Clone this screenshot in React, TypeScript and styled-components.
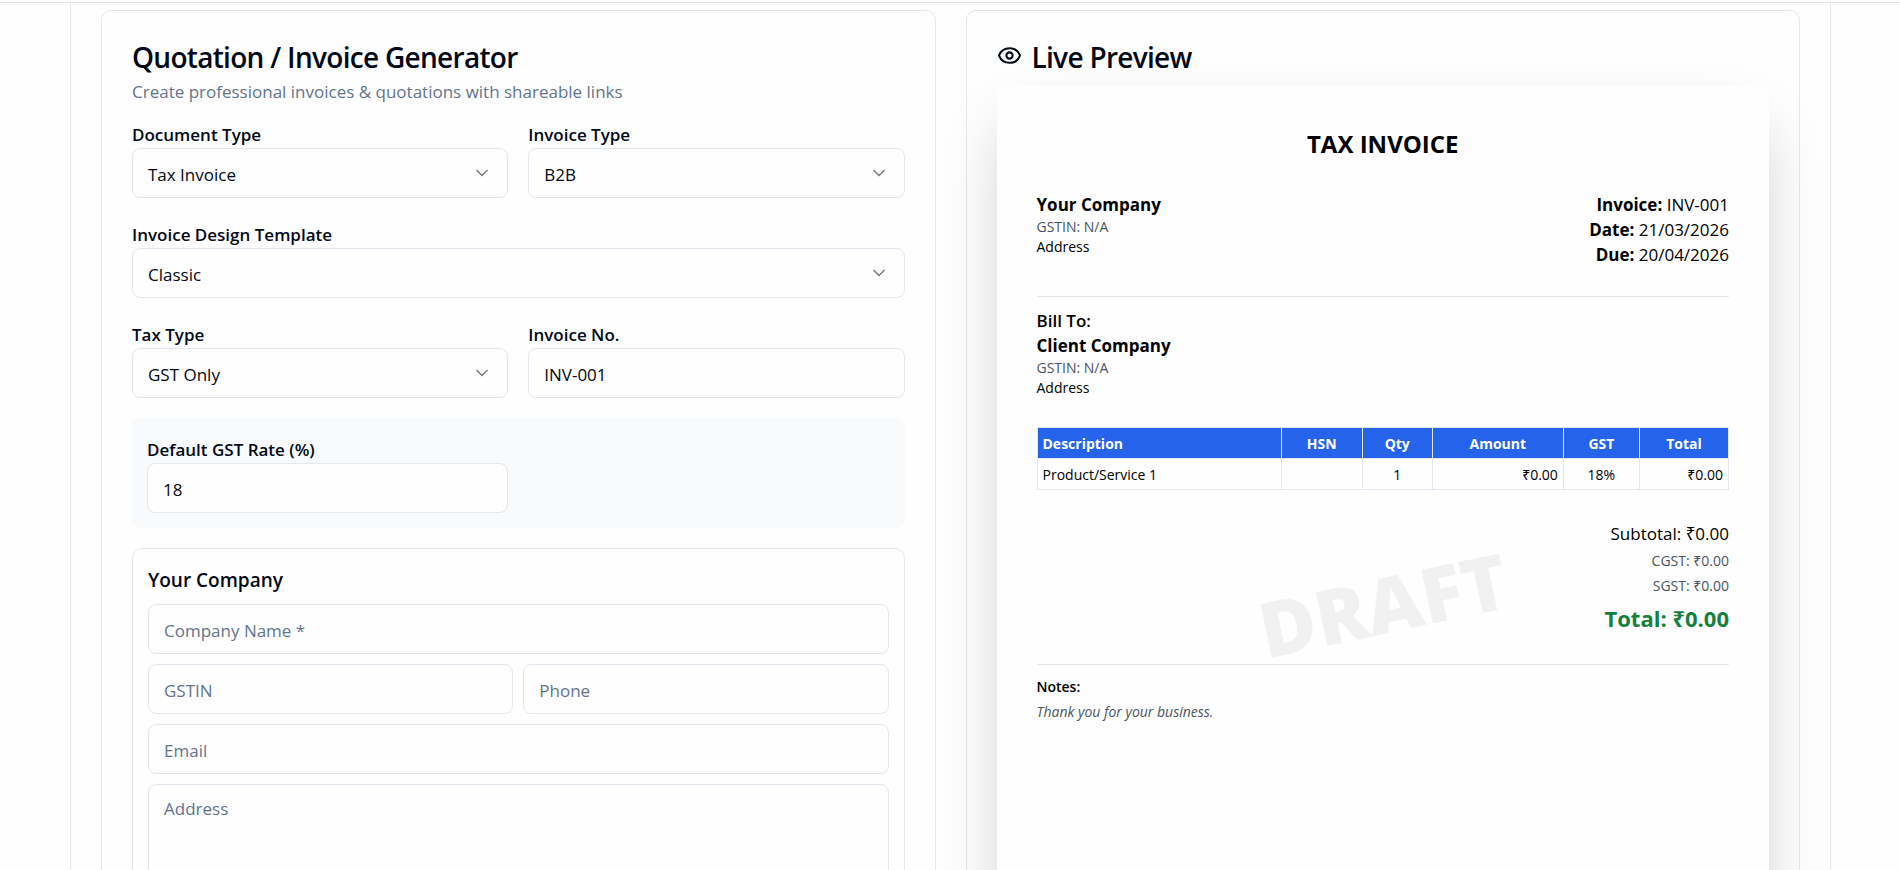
import React, { useId, useState } from "react";
import styled, { createGlobalStyle } from "styled-components";
import { ChevronDown, Eye } from "lucide-react";

const GlobalStyle = createGlobalStyle`
  *, *::before, *::after { box-sizing: border-box; }
  body {
    margin: 0;
    background: #fefefe;
    color: #020817;
    font-family: "Open Sans", "Noto Sans", sans-serif;
    font-size: 17px;
    line-height: 25px;
  }
  h1, h2, h3, p { margin: 0; }
  input, select, textarea, button { font: inherit; color: inherit; }
`;

const TopBar = styled.header`
  height: 3px;
  border-bottom: 1px solid #e2e5e9;
`;

const Container = styled.main`
  margin: 0 69px 0 70px;
  padding: 7px 30px 40px;
  border: solid #e2e5e9;
  border-width: 0 1px;
  display: grid;
  grid-template-columns: minmax(0, 1fr) minmax(0, 1fr);
  gap: 30px;
`;

const Card = styled.section`
  border: 1px solid #e5e8eb;
  border-radius: 10px;
  padding: 30px;
  display: flex;
  flex-direction: column;
`;

const CardTitle = styled.h2`
  display: flex;
  align-items: flex-start;
  gap: 10px;
  font-size: 28px;
  font-weight: 600;
  line-height: 32px;
  letter-spacing: -0.025em;
  svg { margin-top: 2px; }
`;

const Subtitle = styled.p`
  margin-top: 6px;
  color: #64748b;
`;

const Form = styled.form`
  margin-top: 14px;
  display: flex;
  flex-direction: column;
  gap: 20px;
`;

const Columns = styled.div<{ $gap: number }>`
  display: grid;
  grid-template-columns: minmax(0, 1fr) minmax(0, 1fr);
  gap: ${(p) => p.$gap}px;
`;

const FieldBox = styled.div`
  display: flex;
  flex-direction: column;
`;

const Label = styled.label`
  padding-top: 4px;
  font-weight: 600;
  line-height: 26px;
`;

const controlStyle = `
  width: 100%;
  border: 1px solid #e2e8f0;
  border-radius: 8px;
  background: #fefefe;
  padding: 2px 15px 0;
  outline: none;
  &::placeholder { color: #64748b; opacity: 1; }
  &:focus-visible { border-color: #2563eb; }
`;

const Input = styled.input`
  ${controlStyle}
  height: 50px;
`;

const TextArea = styled.textarea`
  ${controlStyle}
  display: block;
  height: 100px;
  padding-top: 11px;
  resize: none;
`;

const SelectWrap = styled.div`
  position: relative;
  svg {
    position: absolute;
    right: 16px;
    top: 15px;
    opacity: 0.5;
    pointer-events: none;
  }
`;

const Select = styled.select`
  ${controlStyle}
  height: 50px;
  appearance: none;
`;

const RatePanel = styled.div`
  background: #f8fafc;
  border-radius: 8px;
  padding: 15px;
`;

const Group = styled.fieldset`
  margin: 0;
  min-width: 0;
  border: 1px solid #e2e8f0;
  border-radius: 10px;
  padding: 15px;
  display: flex;
  flex-direction: column;
  gap: 10px;
`;

const GroupTitle = styled.h3`
  padding-top: 2px;
  font-size: 19px;
  font-weight: 600;
  line-height: 28px;
`;

const Sheet = styled.article`
  position: relative;
  margin-top: 13px;
  min-height: 1036px;
  padding: 40px;
  background: #fefefe;
  color: #000;
  box-shadow: 0 31px 62px -15px rgba(0, 0, 0, 0.25);
`;

const SheetTitle = styled.h1`
  font-size: 24px;
  font-weight: 700;
  line-height: 36px;
  text-align: center;
`;

const SheetHead = styled.div`
  display: flex;
  justify-content: space-between;
  margin-top: 30px;
  padding-bottom: 29px;
  border-bottom: 1px solid #e2e5e9;
`;

const Meta = styled.div`
  text-align: right;
`;

const BillTo = styled.div`
  padding-top: 11px;
`;

const BillLabel = styled.p`
  font-weight: 600;
`;

const PartyName = styled.p`
  font-weight: 700;
`;

const Small = styled.p<{ $muted?: boolean }>`
  font-size: 14px;
  line-height: 20px;
  color: ${(p) => (p.$muted ? "#4b5563" : "inherit")};
`;

const Items = styled.table`
  width: 100%;
  margin-top: 29px;
  border-collapse: collapse;
  table-layout: fixed;
  font-size: 14px;
  line-height: 20px;
`;

const Col = styled.col<{ $w: number }>`
  width: ${(p) => p.$w}px;
`;

type Align = "left" | "center" | "right";

const Th = styled.th<{ $align?: Align }>`
  padding: 6px 5px 4px;
  border: 1px solid #e2e8f0;
  background: #2563eb;
  color: #fff;
  font-weight: 700;
  text-align: ${(p) => p.$align ?? "center"};
`;

const Td = styled.td<{ $align?: Align }>`
  padding: 6px 5px 4px;
  border: 1px solid #e2e8f0;
  text-align: ${(p) => p.$align ?? "center"};
`;

const Totals = styled.div`
  margin-top: 31px;
  padding-bottom: 28px;
  border-bottom: 1px solid #e2e5e9;
  text-align: right;
`;

const TaxLines = styled.div`
  padding-top: 2px;
  font-size: 14px;
  color: #4b5563;
`;

const GrandTotal = styled.p`
  margin-top: 3px;
  font-size: 22px;
  font-weight: 700;
  line-height: 35px;
  color: #15803d;
`;

const Notes = styled.div`
  padding-top: 9px;
  font-size: 14px;
`;

const NotesLabel = styled.p`
  font-weight: 600;
`;

const NotesText = styled.p`
  font-style: italic;
  color: #4b5563;
`;

const Watermark = styled.div`
  position: absolute;
  left: 50%;
  top: 50%;
  transform: translate(-50%, -50%) rotate(-12deg);
  font-size: 77px;
  font-weight: 800;
  line-height: 1;
  color: rgba(0, 0, 0, 0.05);
  pointer-events: none;
`;

function SelectField({ label, options }: { label: string; options: string[] }) {
  const id = useId();
  return (
    <FieldBox>
      <Label htmlFor={id}>{label}</Label>
      <SelectWrap>
        <Select id={id} defaultValue={options[0]}>
          {options.map((o) => (
            <option key={o}>{o}</option>
          ))}
        </Select>
        <ChevronDown size={20} />
      </SelectWrap>
    </FieldBox>
  );
}

function TextField(props: { label: string; value: string; onChange: (v: string) => void }) {
  const id = useId();
  return (
    <FieldBox>
      <Label htmlFor={id}>{props.label}</Label>
      <Input id={id} value={props.value} onChange={(e) => props.onChange(e.target.value)} />
    </FieldBox>
  );
}

function Party({ name }: { name: string }) {
  return (
    <>
      <PartyName>{name}</PartyName>
      <Small $muted>GSTIN: N/A</Small>
      <Small>Address</Small>
    </>
  );
}

export default function App() {
  const [invoiceNo, setInvoiceNo] = useState("INV-001");
  const [rate, setRate] = useState("18");

  return (
    <>
      <GlobalStyle />
      <TopBar />
      <Container>
        <Card>
          <CardTitle>Quotation / Invoice Generator</CardTitle>
          <Subtitle>Create professional invoices &amp; quotations with shareable links</Subtitle>
          <Form>
            <Columns $gap={20}>
              <SelectField label="Document Type" options={["Tax Invoice", "Quotation"]} />
              <SelectField label="Invoice Type" options={["B2B", "B2C"]} />
            </Columns>
            <SelectField label="Invoice Design Template" options={["Classic", "Modern"]} />
            <Columns $gap={20}>
              <SelectField label="Tax Type" options={["GST Only", "No Tax"]} />
              <TextField label="Invoice No." value={invoiceNo} onChange={setInvoiceNo} />
            </Columns>
            <RatePanel>
              <Columns $gap={20}>
                <TextField label="Default GST Rate (%)" value={rate} onChange={setRate} />
              </Columns>
            </RatePanel>
            <Group>
              <GroupTitle>Your Company</GroupTitle>
              <Input aria-label="Company Name" placeholder="Company Name *" />
              <Columns $gap={10}>
                <Input aria-label="GSTIN" placeholder="GSTIN" />
                <Input aria-label="Phone" placeholder="Phone" />
              </Columns>
              <Input type="email" aria-label="Email" placeholder="Email" />
              <TextArea aria-label="Address" placeholder="Address" />
            </Group>
          </Form>
        </Card>

        <Card>
          <CardTitle>
            <Eye size={25} />
            Live Preview
          </CardTitle>
          <Sheet>
            <Watermark>DRAFT</Watermark>
            <SheetTitle>TAX INVOICE</SheetTitle>
            <SheetHead>
              <div>
                <Party name="Your Company" />
              </div>
              <Meta>
                <p><strong>Invoice:</strong> {invoiceNo}</p>
                <p><strong>Date:</strong> 21/03/2026</p>
                <p><strong>Due:</strong> 20/04/2026</p>
              </Meta>
            </SheetHead>
            <BillTo>
              <BillLabel>Bill To:</BillLabel>
              <Party name="Client Company" />
            </BillTo>
            <Items>
              <colgroup>
                <Col $w={244} />
                <Col $w={81} />
                <Col $w={70} />
                <Col $w={131} />
                <Col $w={76} />
                <Col $w={89} />
              </colgroup>
              <thead>
                <tr>
                  <Th $align="left">Description</Th>
                  <Th>HSN</Th>
                  <Th>Qty</Th>
                  <Th>Amount</Th>
                  <Th>GST</Th>
                  <Th>Total</Th>
                </tr>
              </thead>
              <tbody>
                <tr>
                  <Td $align="left">Product/Service 1</Td>
                  <Td />
                  <Td>1</Td>
                  <Td $align="right">₹0.00</Td>
                  <Td>{rate}%</Td>
                  <Td $align="right">₹0.00</Td>
                </tr>
              </tbody>
            </Items>
            <Totals>
              <p>Subtotal: ₹0.00</p>
              <TaxLines>
                <p>CGST: ₹0.00</p>
                <p>SGST: ₹0.00</p>
              </TaxLines>
              <GrandTotal>Total: ₹0.00</GrandTotal>
            </Totals>
            <Notes>
              <NotesLabel>Notes:</NotesLabel>
              <NotesText>Thank you for your business.</NotesText>
            </Notes>
          </Sheet>
        </Card>
      </Container>
    </>
  );
}
